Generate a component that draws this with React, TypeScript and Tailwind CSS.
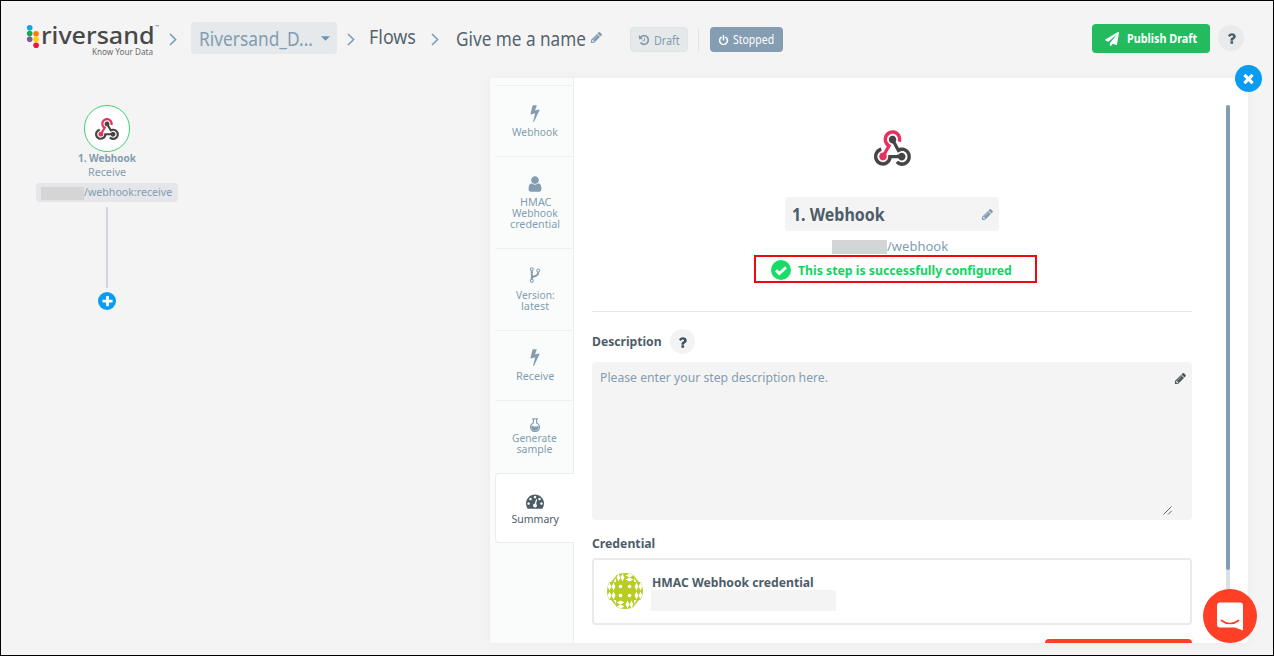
import React, { useLayoutEffect, useRef, useState } from "react";
import { FaPaperPlane } from "react-icons/fa";

const PATHS = {
  bolt: "M1333 566q18 20 7 44l-540 1157q-13 25-42 25-4 0-14-2-17-5-25.5-19t-4.5-30l197-808-406 101q-4 1-12 1-18 0-31-11-18-15-13-39l201-825q4-14 16-23t28-9h328q19 0 32 12.5t13 29.5q0 8-5 18l-171 463 396-98q8-2 12-2 19 0 34 15z",
  user: "M1536 1399q0 109-62.5 187t-150.5 78h-854q-88 0-150.5-78t-62.5-187q0-85 8.5-160.5t31.5-152 58.5-131 94-89 134.5-34.5q131 128 313 128t313-128q76 0 134.5 34.5t94 89 58.5 131 31.5 152 8.5 160.5zm-256-887q0 159-112.5 271.5t-271.5 112.5-271.5-112.5-112.5-271.5 112.5-271.5 271.5-112.5 271.5 112.5 112.5 271.5z",
  fork: "M672 1472q0-40-28-68t-68-28-68 28-28 68 28 68 68 28 68-28 28-68zm0-1152q0-40-28-68t-68-28-68 28-28 68 28 68 68 28 68-28 28-68zm640 128q0-40-28-68t-68-28-68 28-28 68 28 68 68 28 68-28 28-68zm96 0q0 52-26 96.5t-70 69.5q-2 287-226 414-67 38-203 81-128 40-169.5 71t-41.5 100v26q44 25 70 69.5t26 96.5q0 80-56 136t-136 56-136-56-56-136q0-52 26-96.5t70-69.5v-820q-44-25-70-69.5t-26-96.5q0-80 56-136t136-56 136 56 56 136q0 52-26 96.5t-70 69.5v497q54-26 154-57 55-17 87.5-29.5t70.5-31 59-39.5 40.5-51 28-69.5 8.5-91.5q-44-25-70-69.5t-26-96.5q0-80 56-136t136-56 136 56 56 136z",
  pencil: "M491 1536l91-91-235-235-91 91v107h128v128h107zm523-928q0-22-22-22-10 0-17 7l-542 542q-7 7-7 17 0 22 22 22 10 0 17-7l542-542q7-7 7-17zm-54-192l416 416-832 832h-416v-416zm683 96q0 53-37 90l-166 166-416-416 166-165q36-38 90-38 53 0 91 38l235 234q37 39 37 91z",
  times: "M1490 1322q0 40-28 68l-136 136q-28 28-68 28t-68-28l-294-294-294 294q-28 28-68 28t-68-28l-136-136q-28-28-28-68t28-68l294-294-294-294q-28-28-28-68t28-68l136-136q28-28 68-28t68 28l294 294 294-294q28-28 68-28t68 28l136 136q28 28 28 68t-28 68l-294 294 294 294q28 28 28 68z",
  question: "M1088 1256v240q0 16-12 28t-28 12h-240q-16 0-28-12t-12-28v-240q0-16 12-28t28-12h240q16 0 28 12t12 28zm316-600q0 54-15.5 101t-35 76.5-55 59.5-57.5 43.5-61 35.5q-41 23-68.5 65t-27.5 67q0 17-12 32.5t-28 15.5h-240q-15 0-25.5-18.5t-10.5-37.5v-45q0-83 65-156.5t143-108.5q59-27 84-56t25-76q0-42-46.5-74t-107.5-32q-65 0-108 29-35 25-107 115-13 16-31 16-12 0-25-8l-164-125q-13-10-15.5-25t5.5-28q160-266 464-266 80 0 161 31t146 83 106 127.5 41 158.5z",
  gauge: "M384 1152q0-53-37.5-90.5t-90.5-37.5-90.5 37.5-37.5 90.5 37.5 90.5 90.5 37.5 90.5-37.5 37.5-90.5zm192-448q0-53-37.5-90.5t-90.5-37.5-90.5 37.5-37.5 90.5 37.5 90.5 90.5 37.5 90.5-37.5 37.5-90.5zm428 481l101-382q6-26-7.5-48.5t-38.5-29.5-48 6.5-30 39.5l-101 382q-60 5-107 43.5t-63 98.5q-20 77 20 146t117 89 146-20 89-117q16-60-6-117t-72-91zm660-33q0-53-37.5-90.5t-90.5-37.5-90.5 37.5-37.5 90.5 37.5 90.5 90.5 37.5 90.5-37.5 37.5-90.5zm-640-640q0-53-37.5-90.5t-90.5-37.5-90.5 37.5-37.5 90.5 37.5 90.5 90.5 37.5 90.5-37.5 37.5-90.5zm448 192q0-53-37.5-90.5t-90.5-37.5-90.5 37.5-37.5 90.5 37.5 90.5 90.5 37.5 90.5-37.5 37.5-90.5zm320 448q0 261-141 483-19 29-54 29h-1402q-35 0-54-29-141-221-141-483 0-182 71-348t191-286 286-191 348-71 348 71 286 191 191 286 71 348z",
  history: "M1664 896q0 156-61 298t-164 245-245 164-298 61q-172 0-327-72.5t-264-204.5q-7-10-6.5-22.5t8.5-20.5l137-138q10-9 25-9 16 2 23 12 73 95 179 147t225 52q104 0 198.5-40.5t163.5-109.5 109.5-163.5 40.5-198.5-40.5-198.5-109.5-163.5-163.5-109.5-198.5-40.5q-98 0-188 35.5t-160 101.5l137 138q31 30 14 69-17 40-59 40h-448q-26 0-45-19t-19-45v-448q0-42 40-59 39-17 69 14l130 129q107-101 244.5-156.5t284.5-55.5q156 0 298 61t245 164 164 245 61 298zm-640-288v448q0 14-9 23t-23 9h-320q-14 0-23-9t-9-23v-64q0-14 9-23t23-9h224v-352q0-14 9-23t23-9h64q14 0 23 9t9 23z",
  power: "M1664 896q0 156-61 298t-164 245-245 164-298 61-298-61-245-164-164-245-61-298q0-182 80.5-343t226.5-270q43-32 95.5-25t83.5 50q32 42 24.5 94.5t-49.5 84.5q-98 74-151.5 181t-53.5 228q0 104 40.5 198.5t109.5 163.5 163.5 109.5 198.5 40.5 198.5-40.5 163.5-109.5 109.5-163.5 40.5-198.5q0-121-53.5-228t-151.5-181q-42-32-49.5-84.5t24.5-94.5q31-43 84-50t95 25q146 109 226.5 270t80.5 343zm-640-768v640q0 52-38 90t-90 38-90-38-38-90v-640q0-52 38-90t90-38 90 38 38 90z",
  plus: "M1600 736v192q0 40-28 68t-68 28h-416v416q0 40-28 68t-68 28h-192q-40 0-68-28t-28-68v-416h-416q-40 0-68-28t-28-68v-192q0-40 28-68t68-28h416v-416q0-40 28-68t68-28h192q40 0 68 28t28 68v416h416q40 0 68 28t28 68z",
};

function Icon({ name, className }: { name: keyof typeof PATHS; className: string }) {
  return (
    <svg viewBox="0 0 1792 1792" fill="currentColor" className={`block shrink-0 ${className}`}>
      <path d={PATHS[name]} />
    </svg>
  );
}

/* One line of text, condensed or widened to fill the width of its box. */
function Fit({ className, children }: { className: string; children: string }) {
  const box = useRef<HTMLSpanElement>(null);
  const text = useRef<HTMLSpanElement>(null);
  const [scale, setScale] = useState(1);
  useLayoutEffect(() => {
    if (box.current && text.current) {
      setScale(box.current.clientWidth / text.current.offsetWidth);
    }
  }, []);
  return (
    <span ref={box} className={`block shrink-0 whitespace-nowrap ${className}`}>
      <span ref={text} className="inline-block origin-left align-top" style={{ transform: `scaleX(${scale})` }}>
        {children}
      </span>
    </span>
  );
}

function WebhookLogo({ className }: { className: string }) {
  return (
    <svg viewBox="0 0 256 239" preserveAspectRatio="none" className={`block shrink-0 ${className}`}>
      <path fill="#e8305f" d="M119.54 100.503c-10.61 17.836-20.775 35.108-31.152 52.25-2.665 4.401-3.984 7.986-1.855 13.58 5.878 15.454-2.414 30.493-17.998 34.575-14.697 3.851-29.016-5.808-31.932-21.543-2.584-13.927 8.224-27.58 23.58-29.757 1.286-.184 2.6-.205 4.762-.367l23.358-39.168C73.612 95.465 64.868 78.39 66.803 57.23c1.368-14.957 7.25-27.883 18-38.477 20.59-20.288 52.002-23.573 76.246-8.001 23.284 14.958 33.948 44.094 24.858 69.031-6.854-1.858-13.756-3.732-21.343-5.79 2.854-13.865.743-26.315-8.608-36.981-6.178-7.042-14.106-10.733-23.12-12.093-18.072-2.73-35.815 8.88-41.08 26.618-5.976 20.13 3.069 36.575 27.784 48.967z" />
      <path fill="#454543" d="M149.841 79.41c7.475 13.187 15.065 26.573 22.587 39.836 38.02-11.763 66.686 9.284 76.97 31.817 12.422 27.219 3.93 59.457-20.465 76.25-25.04 17.238-56.707 14.293-78.892-7.851 5.654-4.733 11.336-9.487 17.407-14.566 21.912 14.192 41.077 13.524 55.305-3.282 12.133-14.337 11.87-35.714-.615-49.75-14.408-16.197-33.707-16.691-57.035-1.143-9.677-17.168-19.522-34.199-28.893-51.491-3.16-5.828-6.648-9.21-13.77-10.443-11.893-2.062-19.571-12.275-20.032-23.717-.453-11.316 6.214-21.545 16.634-25.53 10.322-3.949 22.435-.762 29.378 8.014 5.674 7.17 7.477 15.24 4.491 24.083-.83 2.466-1.905 4.852-3.07 7.774z" />
      <path fill="#454543" d="M167.707 187.21h-45.77c-4.387 18.044-13.863 32.612-30.19 41.876-12.693 7.2-26.373 9.641-40.933 7.29-26.808-4.323-48.728-28.456-50.658-55.63-2.184-30.784 18.975-58.147 47.178-64.293 1.947 7.071 3.915 14.21 5.862 21.264-25.876 13.202-34.832 29.836-27.59 50.636 6.375 18.304 24.484 28.337 44.147 24.457 20.08-3.962 30.204-20.65 28.968-47.432 19.036 0 38.088-.197 57.126.097 7.434.117 13.173-.654 18.773-7.208 9.22-10.784 26.191-9.811 36.121.374 10.148 10.409 9.662 27.157-1.077 37.127-10.361 9.62-26.73 9.106-36.424-1.26-1.992-2.136-3.562-4.673-5.533-7.298z" />
    </svg>
  );
}

function Chevron({ className }: { className: string }) {
  return (
    <svg viewBox="0 0 8 13" className={`block h-[13px] w-2 shrink-0 ${className}`} fill="none" stroke="#7d9cb5" strokeWidth="1.6">
      <path d="M1 1l5.6 5.5L1 12" />
    </svg>
  );
}

function Flask() {
  return (
    <svg viewBox="0 0 12 14" className="block h-[14px] w-3 shrink-0" fill="none" stroke="#839cb0">
      <path d="M3 .9h6" strokeWidth="1.1" />
      <path d="M4.4 1v3.9a4.500 4.500 0 1 0 3.2 0V1" strokeWidth="1.1" />
      <path d="M2.300 8c1.6-.9 2.6 1 4 .6 1-.3 1.700-.7 3.400-.3a3.800 3.800 0 1 1-7.400-.3z" fill="#839cb0" stroke="none" />
    </svg>
  );
}

function Logo() {
  return (
    <div className="ml-[26px] mt-[24px] flex h-8 w-[132px] shrink-0">
      <svg viewBox="0 0 14 26" className="block h-[26px] w-[14px] shrink-0">
        <circle cx="3.700" cy="3.800" r="2.800" fill="#0ca5e3" />
        <circle cx="3.700" cy="9.600" r="2.800" fill="#0fb04c" />
        <circle cx="3.700" cy="15.300" r="2.800" fill="#8059a3" />
        <circle cx="10.100" cy="9.700" r="2.800" fill="#fb7b12" />
        <circle cx="10.100" cy="15.400" r="2.800" fill="#fdd20a" />
        <circle cx="10.100" cy="21.200" r="2.800" fill="#f8123f" />
      </svg>
      <div className="flex flex-col">
        <div className="flex">
          <Fit className="ml-px h-[23px] w-[114px] text-[24px] font-medium leading-[22px] text-[#48484a]">riversand</Fit>
          <Fit className="h-1 w-1 text-[4px] leading-[5px] text-[#777]">™</Fit>
        </div>
        <Fit className="ml-[52px] w-[61px] text-[8px] leading-[9px] text-[#6b6b6d]">Know Your Data</Fit>
      </div>
    </div>
  );
}

function Header() {
  return (
    <header className="flex h-[78px] items-start text-[#55656f]">
      <Logo />
      <Chevron className="ml-[11px] mt-[33px]" />
      <div className="ml-[14px] mt-[22px] flex h-8 w-[146px] shrink-0 items-center rounded bg-[#e5e9eb] pl-[8px] text-[#839cb0]">
        <Fit className="w-[114px] pt-[2px] text-[19px] leading-[28px]">Riversand_D...</Fit>
        <svg viewBox="0 0 10 5" className="ml-2 mt-px block h-[5px] w-[9px]" fill="#6f93ae"><path d="M0 0h10L5 5z" /></svg>
      </div>
      <Chevron className="ml-[10px] mt-[33px]" />
      <Fit className="ml-[14px] mt-[23px] w-[47px] text-[19px] leading-[28px]">Flows</Fit>
      <Chevron className="ml-[15px] mt-[33px]" />
      <Fit className="ml-[17px] mt-[25px] w-[130px] text-[19px] leading-[28px]">Give me a name</Fit>
      <Icon name="pencil" className="ml-1 mt-[31px] size-[13px] text-[#7d9cb5]" />
      <div className="ml-[27px] mt-[27px] flex h-[25px] w-[58px] shrink-0 items-center rounded border border-[#dfe4e4] bg-[#e6e9e9] pl-[7px] text-[#839cb0]">
        <Icon name="history" className="size-3" />
        <Fit className="ml-1 pt-[2px] w-[26px] text-[12px] leading-[16px]">Draft</Fit>
      </div>
      <div className="ml-[10px] mt-[28px] h-[23px] w-px shrink-0 bg-[#e2e5e7]" />
      <div className="ml-[11px] mt-[27px] flex h-[25px] w-[73px] shrink-0 items-center rounded bg-[#849db2] pl-2 text-white">
        <Icon name="power" className="mt-px size-[11px]" />
        <Fit className="ml-[4px] mt-px w-[41px] text-[12px] leading-[16px]">Stopped</Fit>
      </div>
      <div className="ml-auto mr-[8px] mt-[24px] flex h-[29px] w-[118px] shrink-0 items-center rounded bg-[#23bb5d] pl-[13px] text-white">
        <FaPaperPlane className="size-[14px] shrink-0" />
        <Fit className="ml-[8px] w-[70px] text-[12.500px] font-bold leading-[18px]">Publish Draft</Fit>
      </div>
      <div className="mr-[30px] mt-[25px] flex size-[26px] shrink-0 items-center justify-center rounded-full bg-[#e8eaec] text-[#4d5d68]">
        <Icon name="question" className="size-[15px]" />
      </div>
    </header>
  );
}

function FlowCanvas() {
  return (
    <section className="flex w-[490px] shrink-0 flex-col items-start text-[#839cb0]">
      <div className="ml-[36px] mt-[27px] flex w-[142px] flex-col items-center">
        <div className="flex h-[47px] w-[46px] items-center justify-center rounded-full border border-[#3ecf73] bg-white">
          <WebhookLogo className="mt-px h-[22px] w-[24px]" />
        </div>
        <Fit className="-mt-px w-[58px] text-[11px] font-bold leading-[13px]">1. Webhook</Fit>
        <Fit className="w-[38px] mt-px text-[11px] leading-[13px]">Receive</Fit>
        <div className="mt-[5px] flex h-[19px] w-[142px] items-center rounded bg-[#e4e6ea] pl-[5px]">
          <span className="mt-[2px] h-[13px] w-[43px] bg-[#d5d5d5]" />
          <Fit className="-mt-px w-[88px] text-[11px] leading-[14px]">/webhook:receive</Fit>
        </div>
        <div className="mt-[5px] h-[81px] w-[2px] bg-[#d0d5e1]" />
        <div className="mt-1 flex size-[18px] items-center justify-center rounded-full bg-[#0a9cf0] text-white">
          <Icon name="plus" className="size-[13px]" />
        </div>
      </div>
    </section>
  );
}

function Sidebar() {
  const line = "text-[10.500px] leading-[11px]";
  return (
    <nav className="flex w-[84px] shrink-0 flex-col rounded-l-sm border-r border-[#eceeef] bg-[#fafcfb] pl-[5px] pt-[7px] text-[#839cb0]">
      <div className="flex h-[71px] flex-col items-center border-t border-[#edf0f0] pl-[2px] pt-[18px]">
        <Icon name="bolt" className="size-[18px]" />
        <Fit className={`${line} mt-[5px] w-[46px]`}>Webhook</Fit>
      </div>
      <div className="flex h-[92px] flex-col items-center border-t border-[#edf0f0] pl-[2px] pt-[18px]">
        <Icon name="user" className="size-[18px]" />
        <Fit className={`${line} mt-[4px] w-[31px]`}>HMAC</Fit>
        <Fit className={`${line} w-[46px]`}>Webhook</Fit>
        <Fit className={`${line} w-[50px]`}>credential</Fit>
      </div>
      <div className="flex h-[82px] flex-col items-center border-t border-[#edf0f0] pl-[2px] pt-[17px]">
        <Icon name="fork" className="size-[18px]" />
        <Fit className={`${line} mt-[6px] w-[39px]`}>Version:</Fit>
        <Fit className={`${line} w-[28px]`}>latest</Fit>
      </div>
      <div className="flex h-[70px] flex-col items-center border-t border-[#edf0f0] pl-[2px] pt-[17px]">
        <Icon name="bolt" className="size-[18px]" />
        <Fit className={`${line} mt-[5px] w-[38px]`}>Receive</Fit>
      </div>
      <div className="flex h-[73px] flex-col items-center border-t border-[#edf0f0] pl-px pt-[17px]">
        <Flask />
        <Fit className={`${line} mt-px w-[45px]`}>Generate</Fit>
        <Fit className={`${line} w-[36px]`}>sample</Fit>
      </div>
      <div className="-mr-px flex h-[70px] flex-col items-center rounded-l border border-r-0 border-[#e9ecec] bg-white pt-[18px] text-[#4d5d68]">
        <Icon name="gauge" className="size-[18px]" />
        <Fit className={`${line} mt-[4px] w-[47px]`}>Summary</Fit>
      </div>
    </nav>
  );
}

/* Identicon tiles around the centre square: [x, y, diamonds run upright]. */
const TILES: [number, number, boolean][] = [
  [9, 0, true],
  [18, 0, false],
  [27, 9, true],
  [27, 18, true],
  [18, 27, true],
  [9, 27, false],
  [0, 18, true],
  [0, 9, true],
];

function Avatar() {
  return (
    <svg viewBox="0 0 36 36" className="block size-9 shrink-0" fill="#b8cc24">
      <defs>
        <clipPath id="round"><circle cx="18" cy="18" r="18" /></clipPath>
      </defs>
      <g clipPath="url(#round)">
        <rect x="9" y="9" width="18" height="18" />
        {TILES.map(([x, y, upright]) => (
          <g key={`${x}-${y}`} transform={upright ? `translate(${x} ${y})` : `translate(${x + 9} ${y}) rotate(90)`}>
            <path d="M0 0h9v9H0z M2.500 .6L4.400 4.500 2.500 8.400.6 4.500z M6.500 .6L8.400 4.500 6.500 8.400 4.600 4.500z" fillRule="evenodd" />
          </g>
        ))}
        <path d="M4 9l5-6v2L6.500 9z M32 9l-5-6v2l2.500 4z M4 27l5 6v-2l-2.500-4z M32 27l-5 6v-2l2.500-4z" />
        <g fill="#fff">
          <circle cx="13.500" cy="13.500" r="1.800" />
          <circle cx="22.500" cy="13.500" r="1.800" />
          <circle cx="13.500" cy="22.500" r="1.800" />
          <circle cx="22.500" cy="22.500" r="1.800" />
        </g>
      </g>
    </svg>
  );
}

function Summary() {
  return (
    <div className="flex w-[600px] shrink-0 flex-col overflow-hidden text-[#4d5d68]">
      <div className="flex flex-col items-center border-b border-[#e5e7e8] pb-[28px] pt-[52px]">
        <WebhookLogo className="h-[36px] w-[37px]" />
        <div className="mt-[31px] flex h-[34px] w-[214px] items-center rounded bg-[#f4f4f4] pl-[7px]">
          <Fit className="w-[93px] text-[18px] font-bold leading-6">1. Webhook</Fit>
          <Icon name="pencil" className="ml-[96px] mt-px size-[13px] text-[#839cb0]" />
        </div>
        <div className="mr-[4px] mt-[6px] flex h-[18px] items-end">
          <span className="mb-px h-[14px] w-[55px] bg-[#d5d5d5]" />
          <Fit className="w-[61px] text-[13px] leading-[17px] text-[#839cb0]">/webhook</Fit>
        </div>
        <div className="ml-[7px] flex h-[28px] w-[283px] items-center border-2 border-[#ee0a0a] pl-[15px]">
          <svg viewBox="0 0 20 20" className="mt-px block size-5 shrink-0">
            <circle cx="10" cy="10" r="10" fill="#17dc67" />
            <path d="M5 10.200l3.300 3.300L15 7.400" fill="none" stroke="#fff" strokeWidth="2.800" />
          </svg>
          <Fit className="ml-[7px] mt-[2px] w-[214px] text-[13px] font-bold leading-[18px] text-[#10d461]">This step is successfully configured</Fit>
        </div>
      </div>
      <div className="mt-[17px] flex h-[25px] items-center">
        <Fit className="-mt-px w-[70px] text-[13px] font-bold leading-[18px]">Description</Fit>
        <div className="ml-[8px] flex size-[25px] items-center justify-center rounded-full bg-[#f3f3f3]">
          <Icon name="question" className="mt-px size-[15px] text-[#3f5160]" />
        </div>
      </div>
      <div className="mt-[8px] flex h-[158px] shrink-0 justify-between rounded bg-[#f4f4f4] pl-2 pr-[5px] pt-[6px]">
        <Fit className="w-[228px] text-[13px] leading-[18px] text-[#839cb0]">Please enter your step description here.</Fit>
        <div className="flex w-[24px] flex-col items-end">
          <Icon name="pencil" className="mt-[4px] size-[13px] text-[#4d565d]" />
          <svg viewBox="0 0 9 9" className="mr-[15px] mt-[121px] block size-[9px] shrink-0" stroke="#555" strokeWidth=".9">
            <path d="M.5 8.500l8-8M5 8.500L8.500 5" />
          </svg>
        </div>
      </div>
      <Fit className="mt-[14px] w-[63px] text-[13px] font-bold leading-[18px]">Credential</Fit>
      <div className="mt-[6px] flex h-[67px] shrink-0 items-start rounded-[4px] border-2 border-[#e9eaea] pl-[13px] pt-[13px]">
        <Avatar />
        <div className="ml-2">
          <Fit className="ml-[1px] w-[162px] text-[13px] font-bold leading-[18px]">HMAC Webhook credential</Fit>
          <div className="-mt-px h-[21px] w-[185px] bg-[#f4f4f4]" />
        </div>
      </div>
      <div className="ml-auto mt-[14px] h-[38px] w-[147px] shrink-0 rounded bg-[#ff3f26]" />
    </div>
  );
}

function Panel() {
  return (
    <section className="relative flex h-[565px] w-[758px] shrink-0 rounded-sm bg-white shadow-[0_0_10px_rgba(0,0,0,0.05)]">
      <Sidebar />
      <div className="flex overflow-hidden pl-[18px]">
        <Summary />
        <div className="ml-[34px] mt-[27px] h-[530px] w-1 rounded-full bg-[#d6e1ea]">
          <div className="h-[465px] w-1 rounded-full bg-[#829cb0]" />
        </div>
      </div>
      <button className="absolute -right-[14px] -top-[13px] flex size-[27px] items-center justify-center rounded-full bg-[#0a9cf0] text-white">
        <Icon name="times" className="mb-px mr-px size-[15px]" />
      </button>
      <button className="absolute -right-[9px] bottom-0 flex size-[54px] items-center justify-center rounded-full bg-[#ff3f26]">
        <svg viewBox="0 0 26 29" className="mt-[1px] block h-[29px] w-[26px]">
          <path d="M3 .5h20a3 3 0 0 1 3 3V28.500l-8-3H3a3 3 0 0 1-3-3v-19a3 3 0 0 1 3-3z" fill="#fff" />
          <path d="M4.500 18.500c5 4 12 4 17 0" fill="none" stroke="#ff3f26" strokeWidth="1.700" strokeLinecap="round" />
        </svg>
      </button>
    </section>
  );
}

export default function App() {
  return (
    <div className="relative h-[656px] w-[1274px] overflow-hidden bg-[#f4f4f4] font-['Noto_Sans','Open_Sans',sans-serif]">
      <Header />
      <main className="flex">
        <FlowCanvas />
        <Panel />
      </main>
      <div className="pointer-events-none absolute inset-0 border border-black" />
    </div>
  );
}
